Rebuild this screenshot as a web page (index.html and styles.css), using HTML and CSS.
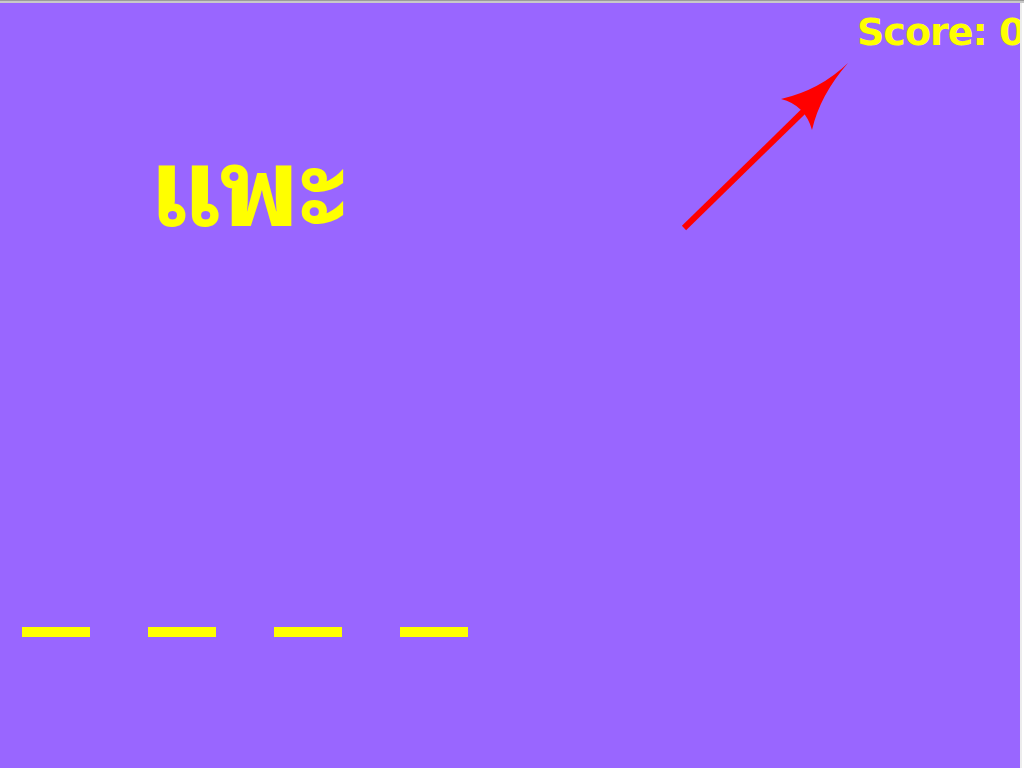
FILE: index.html
```html
<!DOCTYPE html>
<html lang="th">
<head>
<meta charset="utf-8">
<title>Game</title>
<link rel="stylesheet" href="styles.css">
</head>
<body>
<div class="frame">
  <main class="stage">
    <header class="topbar">
      <div class="score">Score: 0</div>
    </header>
    <h1 class="word">แพะ</h1>
    <div class="slots">
      <span class="slot"></span>
      <span class="slot"></span>
      <span class="slot"></span>
      <span class="slot"></span>
    </div>
    <svg class="arrow" width="200" height="200" viewBox="660 50 200 200" aria-hidden="true">
      <line x1="684" y1="228" x2="812" y2="103" stroke="#ff0000" stroke-width="6"/>
      <path d="M848 63 Q 820 90 781 99 Q 805 105 812 130 Q 820 95 848 63 Z" fill="#ff0000"/>
    </svg>
  </main>
</div>
</body>
</html>
```
FILE: styles.css
```css
html, body {
  margin: 0;
  padding: 0;
  background: #ffffff;
}

.frame {
  width: 1024px;
  height: 768px;
  padding-top: 3px;
  box-sizing: border-box;
  background: linear-gradient(#9a9a9a 0, #9a9a9a 1px, #c8c8c8 1px, #c8c8c8 3px, #ffffff 3px);
}

.stage {
  position: relative;
  width: 1020px;
  height: 765px;
  background: #9966ff;
  border-right: 2px solid #ececec;
  overflow: hidden;
  font-family: "DejaVu Sans", "Liberation Sans", sans-serif;
}

.topbar {
  display: flex;
  padding: 7px 0 0 857px;
  height: 50px;
  box-sizing: border-box;
}

.score {
  color: #ffff00;
  font-weight: bold;
  font-size: 38px;
  line-height: 44px;
  white-space: nowrap;
  letter-spacing: -1px;
}

.word {
  margin: 0;
  padding: 60px 0 0 149px;
  color: #ffff00;
  font-family: "Noto Sans Thai Looped", "Noto Sans Thai", sans-serif;
  font-weight: bold;
  font-size: 108px;
  line-height: 130px;
}

.slots {
  display: flex;
  gap: 58px;
  padding: 384px 0 0 22px;
}

.slot {
  display: block;
  width: 68px;
  height: 10px;
  background: #ffff00;
}

.arrow {
  position: absolute;
  left: 660px;
  top: 47px;
}
```
